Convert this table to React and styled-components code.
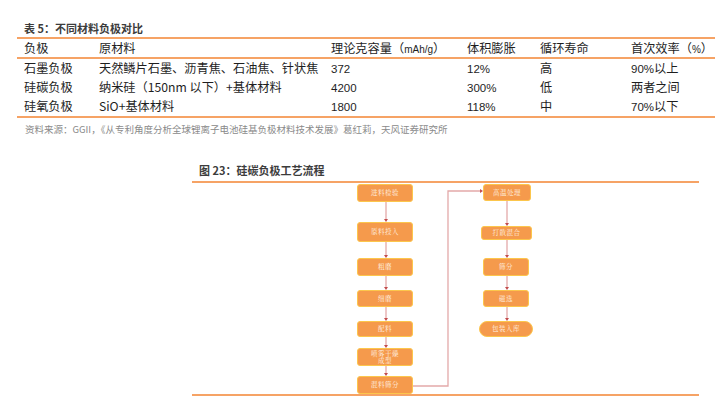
import React from "react";
import styled, { createGlobalStyle } from "styled-components";

const Global = createGlobalStyle`
  html, body { margin: 0; padding: 0; background: #fff; }
  body { font-family: "Liberation Sans", "Noto Sans CJK SC", sans-serif; color: #1d1d1d; }
`;

const ORANGE = "#f6a365";

const Page = styled.div`
  width: 720px;
  height: 397px;
  overflow: hidden;
  padding-top: 19px;
  box-sizing: border-box;
`;

const TableSection = styled.section`
  margin-left: 17px;
  width: 698px;
`;

const Caption = styled.div`
  padding-left: 7px;
  font-size: 11px;
  line-height: 18px;
  font-weight: 700;
  color: #3c3c3c;
  font-family: "Noto Sans CJK SC", "Liberation Sans", sans-serif;
`;

const Table = styled.div`
  border-top: 2px solid ${ORANGE};
  border-bottom: 2px solid ${ORANGE};
`;

const Row = styled.div`
  display: grid;
  grid-template-columns: 75px 232px 136px 73px 91px 1fr;
  padding-left: 7px;
  height: ${(p) => (p.$head ? 18 : 19)}px;
  align-items: center;
  font-size: 12.2px;
  font-family: "Noto Sans CJK SC", sans-serif;
  color: #1e1e1e;
  ${(p) => p.$head && `border-bottom: 2px solid ${ORANGE};`}
`;

const Cell = styled.div`
  white-space: nowrap;
  line-height: 1;
`;

const Num = styled.span`
  font-family: "Liberation Sans", sans-serif;
  font-size: 11.5px;
`;

const Small = styled.span`
  font-family: "Liberation Sans", sans-serif;
  font-size: 10px;
`;

const Source = styled.div`
  margin-top: 3px;
  padding-left: 8px;
  font-size: 9.5px;
  line-height: 16px;
  color: #8a8a8a;
  white-space: nowrap;
  font-family: "Noto Sans CJK SC", sans-serif;
`;

const Figure = styled.section`
  margin-top: 25px;
  margin-left: 192px;
  width: 507px;
`;

const FigTitle = styled.div`
  padding-left: 7px;
  padding-bottom: 3px;
  font-size: 11px;
  line-height: 16px;
  font-weight: 700;
  color: #3c3c3c;
  font-family: "Noto Sans CJK SC", sans-serif;
  border-bottom: 2px solid ${ORANGE};
`;

const Canvas = styled.div`
  position: relative;
  height: 211px;
  border-bottom: 2px solid ${ORANGE};
`;

const Wires = styled.svg`
  position: absolute;
  left: 0;
  top: 0;
  overflow: visible;
`;

const Node = styled.div`
  position: absolute;
  box-sizing: border-box;
  display: flex;
  flex-direction: column;
  align-items: center;
  justify-content: center;
  text-align: center;
  background: #f59a4c;
  border: 1.5px solid #fcc64c;
  border-radius: ${(p) => (p.$pill ? "9px" : "3px")};
  color: #fff3e6;
  font-family: "Noto Serif CJK SC", "Noto Sans CJK SC", serif;
  font-size: 6.5px;
  line-height: 7.5px;
  letter-spacing: 0.5px;
`;

const NodeLine = styled.span`
  display: block;
  white-space: nowrap;
`;

const leftNodes = [
  { t: "进料检验", top: 1, h: 18 },
  { t: "原料投入", top: 39, h: 20 },
  { t: "粗磨", top: 75, h: 18 },
  { t: "细磨", top: 107, h: 17 },
  { t: "配料", top: 138, h: 16 },
  { t: "喷雾干燥\n成型", top: 165, h: 18 },
  { t: "混料筛分", top: 193, h: 18 },
];

const rightNodes = [
  { t: "高温处理", top: 1, h: 17, left: 291, w: 48 },
  { t: "打散混合", top: 43, h: 14, left: 289, w: 51 },
  { t: "筛分", top: 75, h: 18, left: 291, w: 46 },
  { t: "磁选", top: 107, h: 17, left: 291, w: 46 },
  { t: "包装入库", top: 138, h: 16, left: 287, w: 54, pill: true },
];

const LINE = "#e3a9a9";
const HEAD = "#c24d4d";

function Arrow({ x, y1, y2 }) {
  return (
    <g>
      <line x1={x} y1={y1} x2={x} y2={y2 - 2} stroke={LINE} strokeWidth="1.3" />
      <polygon points={`${x - 2},${y2 - 3} ${x + 2},${y2 - 3} ${x},${y2}`} fill={HEAD} />
    </g>
  );
}

const rows = [
  ["石墨负极", "天然鳞片石墨、沥青焦、石油焦、针状焦", "372", "12%", "高", "90%以上"],
  ["硅碳负极", "纳米硅（150nm 以下）+基体材料", "4200", "300%", "低", "两者之间"],
  ["硅氧负极", "SiO+基体材料", "1800", "118%", "中", "70%以下"],
];

function renderMixed(s) {
  const parts = s.split(/([0-9%]+)/);
  return parts.map((p, i) => (/^[0-9%]+$/.test(p) ? <Num key={i}>{p}</Num> : p));
}

export default function App() {
  const lx = 194;
  const rx = 315;
  return (
    <Page>
      <Global />
      <TableSection>
        <Caption>表 5：不同材料负极对比</Caption>
        <Table>
          <Row $head>
            <Cell>负极</Cell>
            <Cell>原材料</Cell>
            <Cell>
              理论克容量（<Small>mAh/g</Small>）
            </Cell>
            <Cell>体积膨胀</Cell>
            <Cell>循环寿命</Cell>
            <Cell>
              首次效率（<Small>%</Small>）
            </Cell>
          </Row>
          {rows.map((r) => (
            <Row key={r[0]}>
              {r.map((c, i) => (
                <Cell key={i}>{i === 1 ? c : renderMixed(c)}</Cell>
              ))}
            </Row>
          ))}
        </Table>
        <Source>资料来源：GGII，《从专利角度分析全球锂离子电池硅基负极材料技术发展》葛红莉，天风证券研究所</Source>
      </TableSection>

      <Figure>
        <FigTitle>图 23：硅碳负极工艺流程</FigTitle>
        <Canvas>
          <Wires width="507" height="211">
            <Arrow x={lx} y1={19} y2={39} />
            <Arrow x={lx} y1={59} y2={75} />
            <Arrow x={lx} y1={93} y2={107} />
            <Arrow x={lx} y1={124} y2={138} />
            <Arrow x={lx} y1={154} y2={165} />
            <Arrow x={lx} y1={183} y2={193} />
            <Arrow x={rx} y1={18} y2={43} />
            <Arrow x={rx} y1={57} y2={75} />
            <Arrow x={rx} y1={93} y2={107} />
            <Arrow x={rx} y1={124} y2={138} />
            <polyline points="221,203 256,203 256,8 289,8" fill="none" stroke={LINE} strokeWidth="1.3" />
            <polygon points="288,6 291,8 288,10" fill={HEAD} />
          </Wires>
          {leftNodes.map((n) => (
            <Node key={n.t} style={{ left: 165, top: n.top, width: 56, height: n.h }}>
              {n.t.split("\n").map((l, i) => (
                <NodeLine key={i}>{l}</NodeLine>
              ))}
            </Node>
          ))}
          {rightNodes.map((n) => (
            <Node key={n.t} $pill={n.pill} style={{ left: n.left, top: n.top, width: n.w, height: n.h }}>
              <NodeLine>{n.t}</NodeLine>
            </Node>
          ))}
        </Canvas>
      </Figure>
    </Page>
  );
}
